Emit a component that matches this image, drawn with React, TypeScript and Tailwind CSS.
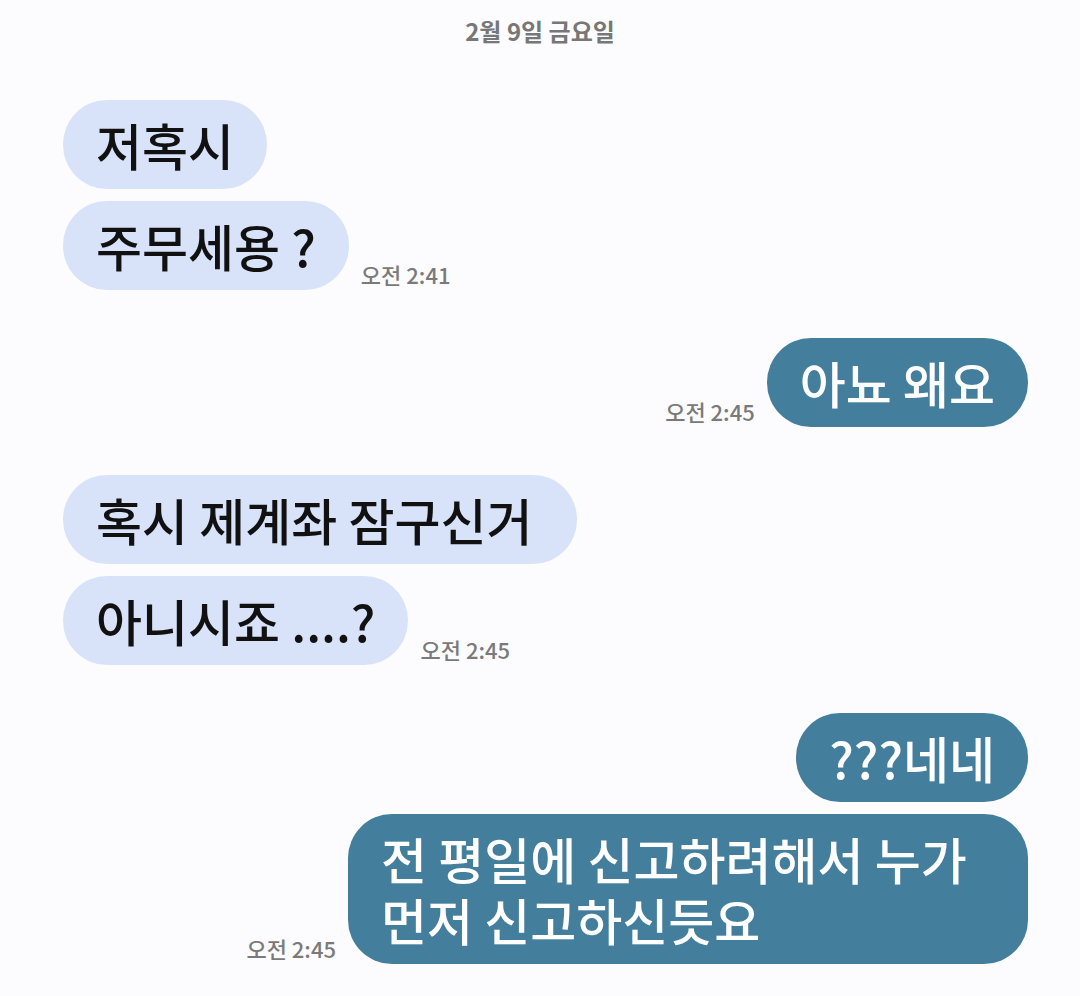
type Msg = {
  side: 'in' | 'out';
  lines: string[];
  time?: string;
  gap: string;
  width?: string;
};

const messages: Msg[] = [
  { side: 'in', lines: ['저혹시'], gap: 'mt-[54px]' },
  { side: 'in', lines: ['주무세용 ?'], time: '오전 2:41', gap: 'mt-3' },
  { side: 'out', lines: ['아뇨 왜요'], time: '오전 2:45', gap: 'mt-12' },
  { side: 'in', lines: ['혹시 제계좌 잠구신거'], gap: 'mt-12', width: 'w-[514px]' },
  { side: 'in', lines: ['아니시죠 ....?'], time: '오전 2:45', gap: 'mt-3' },
  { side: 'out', lines: ['???네네'], gap: 'mt-12' },
  {
    side: 'out',
    lines: ['전 평일에 신고하려해서 누가', '먼저 신고하신듯요'],
    time: '오전 2:45',
    gap: 'mt-3',
    width: 'w-[680px]',
  },
];

function Stamp({ text }: { text: string }) {
  return (
    <span className="mb-[3px] text-[22px] leading-[26px] font-medium text-[#7a7a7a] whitespace-nowrap">
      {text}
    </span>
  );
}

function Bubble({ msg }: { msg: Msg }) {
  const isIn = msg.side === 'in';
  return (
    <div className={`flex items-end gap-3 ${isIn ? 'justify-start' : 'justify-end'} ${msg.gap}`}>
      {!isIn && msg.time && <Stamp text={msg.time} />}
      <div
        className={`rounded-[44px] px-[33px] py-[14px] text-[50px] leading-[61px] font-medium whitespace-nowrap ${
          isIn ? 'bg-[#d8e3fa] text-[#111111]' : 'bg-[#447e9d] text-white'
        } ${msg.width ?? ''}`}
      >
        {msg.lines.map((l, i) => (
          <div key={i}>{l}</div>
        ))}
      </div>
      {isIn && msg.time && <Stamp text={msg.time} />}
    </div>
  );
}

export default function App() {
  return (
    <div className="w-[1080px] h-[996px] bg-[#fcfcfe] font-['Noto_Sans_CJK_KR','Noto_Sans',sans-serif] overflow-hidden">
      <div className="pt-4 text-center text-[24px] leading-[30px] font-semibold text-[#777777]">
        2월 9일 금요일
      </div>
      <div className="pl-[63px] pr-[52px]">
        {messages.map((m, i) => (
          <Bubble key={i} msg={m} />
        ))}
      </div>
    </div>
  );
}
